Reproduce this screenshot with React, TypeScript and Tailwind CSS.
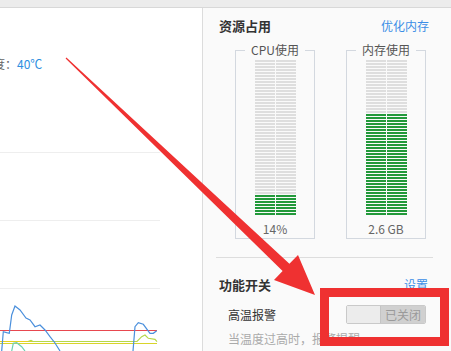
import React from "react";

const ROWS = 52;

// striped two-column usage meter, filled from the bottom
function Meter({ filled }: { filled: number }) {
  return (
    <div className="flex flex-col gap-[1px]">
      {Array.from({ length: ROWS }, (_, i) => {
        const on = i >= ROWS - filled;
        const cell = on ? "h-[2px] w-[20px] bg-[#22993a]" : "h-[2px] w-[20px] bg-[#dedede]";
        return (
          <div key={i} className="flex gap-[1px]">
            <div className={cell} />
            <div className={cell} />
          </div>
        );
      })}
    </div>
  );
}

function UsageBox({ title, filled, value }: { title: string; filled: number; value: string }) {
  return (
    <fieldset className="w-[80px] border border-[#d3d8df] pb-[1px]">
      <legend className="mx-auto px-[6px] text-[12px] leading-[16px] text-[#555]">{title}</legend>
      <div className="mt-[2px] flex justify-center">
        <Meter filled={filled} />
      </div>
      <div className="mt-[6px] text-center text-[12px] leading-[16px] text-[#666]">{value}</div>
    </fieldset>
  );
}

function TempChart() {
  return (
    <svg width="160" height="62" viewBox="0 289 160 62" className="mt-0 block">
      <line x1="0" y1="330.5" x2="157" y2="330.5" stroke="#e8474f" strokeWidth="1.2" />
      <line x1="0" y1="341.5" x2="137" y2="341.5" stroke="#e6d21e" strokeWidth="1.2" />
      <line x1="0" y1="343.5" x2="157" y2="343.5" stroke="#d9d42a" strokeWidth="1.2" />
      <polyline
        fill="none"
        stroke="#b5d84a"
        strokeWidth="1.2"
        points="28,341.5 31,340.5 33,341.5 137,341.5 141.7,336.7 145,335 148.3,338.3 155,339.3 157,341.7"
      />
      <polyline
        fill="none"
        stroke="#6fd0b0"
        strokeWidth="1.2"
        points="11.7,351 13.3,343.3 16.7,342.7 21.7,346.7 25,351"
      />
      <polyline
        fill="none"
        stroke="#4a8fdc"
        strokeWidth="1.2"
        points="1.7,351 3.3,331.7 6.7,332.7 9.3,333.3 11.7,315 15,306 20,310 26,318 30,320 35,326.7 40,325 45,330 50,336.7 55,343 60,351"
      />
      <polyline
        fill="none"
        stroke="#4a8fdc"
        strokeWidth="1.2"
        points="133,351 135,326.7 138.3,322.7 143.3,324.3 150,333.3 153.3,333.3 156.7,330.7"
      />
    </svg>
  );
}

export default function App() {
  return (
    <div className="relative h-[351px] w-[451px] overflow-hidden bg-white font-['Noto_Sans_CJK_SC',sans-serif]">
      <div className="h-[8px] border-b border-[#d8d8d8] bg-[#ececec]" />
      <div className="flex h-[343px]">
        {/* left: temperature monitor */}
        <div className="w-[203px] shrink-0 border-r border-[#dcdcdc] bg-white">
          <div className="mt-[48px] ml-[-7px] text-[12px] leading-[16px]">
            <span className="text-[#666]">度：</span>
            <span className="text-[#2e8fdf]">40℃</span>
          </div>
          <div className="mt-[80px] w-[160px] border-t border-[#eeeeee]" />
          <div className="mt-[67px] w-[160px] border-t border-[#eeeeee]" />
          <div className="mt-[67px] w-[160px] border-t border-[#eeeeee]" />
          <TempChart />
        </div>

        {/* right: resources + switches */}
        <div className="flex-1 bg-[#fafafa]">
          <div className="mt-[8px] flex h-[20px] items-center justify-between pl-[16px] pr-[22px]">
            <span className="text-[13px] font-bold text-[#333]">资源占用</span>
            <span className="text-[12px] text-[#3a8ee6]">优化内存</span>
          </div>
          <div className="mt-[6px] flex gap-[31px] pl-[32px]">
            <UsageBox title="CPU使用" filled={7} value="14%" />
            <UsageBox title="内存使用" filled={34} value="2.6 GB" />
          </div>
          <div className="ml-[13px] mr-[18px] mt-[18px] border-t border-[#dddddd]" />
          <div className="mt-[17px] flex h-[20px] items-center justify-between pl-[16px] pr-[23px]">
            <span className="text-[13px] font-bold text-[#333]">功能开关</span>
            <span className="text-[12px] text-[#3a8ee6]">设置</span>
          </div>
          <div className="mt-[10px] flex h-[19px] items-center justify-between pl-[25px] pr-[25px]">
            <span className="text-[12px] text-[#333]">高温报警</span>
            <div className="flex h-[19px] w-[80px] overflow-hidden rounded-[2px] border border-[#c9c9c9]">
              <div className="w-[33px] bg-[#ececec]" />
              <div className="flex flex-1 items-center justify-center border-l border-[#c4c4c4] bg-[#d0d0d0] text-[12px] leading-none text-[#9a9a9a]">
                已关闭
              </div>
            </div>
          </div>
          <div className="mt-[7px] pl-[25px] text-[12px] leading-[16px] text-[#aaaaaa]">
            当温度过高时，报警提醒
          </div>
        </div>
      </div>

      {/* annotation overlay */}
      <svg className="pointer-events-none absolute inset-0" width="451" height="351">
        <polygon
          fill="#ef3131"
          points="66.4,57.6 289.4,263.8 298,255 315,295 274,280 282.6,271 65.6,58.4"
        />
      </svg>
      <div className="pointer-events-none absolute left-[320px] top-[288px] h-[58px] w-[129px] border-[9px] border-[#ef3131]" />
    </div>
  );
}
